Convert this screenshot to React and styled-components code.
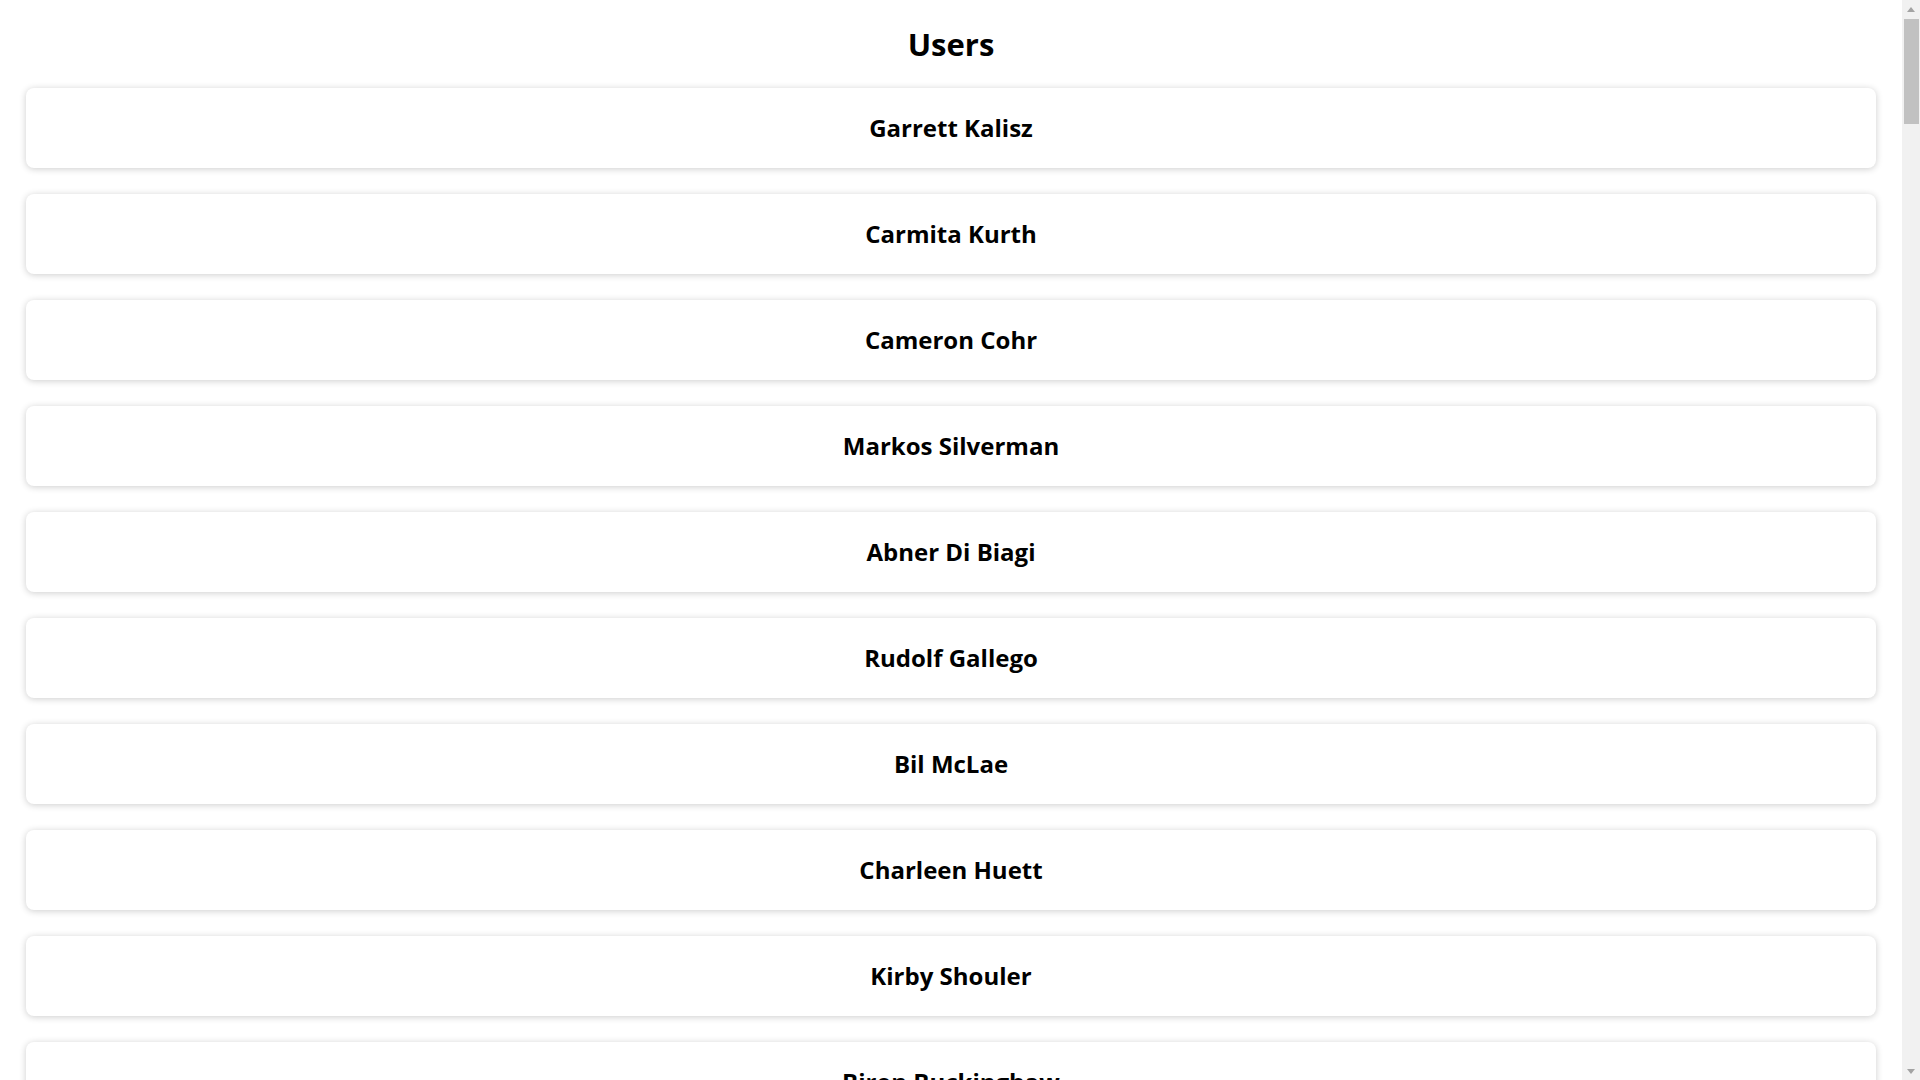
import React from 'react';
import styled, { createGlobalStyle } from 'styled-components';

const GlobalStyle = createGlobalStyle`
  html, body {
    margin: 0;
    padding: 0;
    background: #fff;
    overflow: hidden;
  }
  body {
    font-family: 'Open Sans', 'Noto Sans', sans-serif;
    color: #000;
  }
`;

const Shell = styled.div`
  display: flex;
  height: 100vh;
  overflow: hidden;
`;

const Main = styled.main`
  flex: 1;
  min-width: 0;
  overflow: hidden;
  padding: 0 26px;
`;

const ScrollBar = styled.div`
  width: 18px;
  flex-shrink: 0;
  display: flex;
  flex-direction: column;
  background: #f1f1f1;
`;

const ScrollButton = styled.div`
  height: 18px;
  display: flex;
  align-items: center;
  justify-content: center;

  &::before {
    content: '';
    width: 0;
    height: 0;
    border-left: 4.5px solid transparent;
    border-right: 4.5px solid transparent;
    ${({ $dir }) =>
      $dir === 'up'
        ? 'border-bottom: 5px solid #a3a3a3;'
        : 'border-top: 5px solid #a3a3a3;'}
  }
`;

const Track = styled.div`
  flex: 1;
  padding: 1px 1px 0 2px;
`;

const Thumb = styled.div`
  height: 105px;
  background: #c1c1c1;
`;

const Title = styled.h1`
  margin: 0 0 24px;
  padding-top: 24px;
  font-size: 31px;
  line-height: 40px;
  font-weight: 700;
  text-align: center;
`;

const List = styled.ul`
  list-style: none;
  margin: 0;
  padding: 0;
  display: flex;
  flex-direction: column;
  gap: 26px;
`;

const Card = styled.li`
  height: 80px;
  flex-shrink: 0;
  display: flex;
  align-items: center;
  justify-content: center;
  background: #fff;
  border-radius: 8px;
  box-shadow: 0 1px 7px rgba(0, 0, 0, 0.2);
`;

const Name = styled.h2`
  margin: 0;
  font-size: 24px;
  line-height: 30px;
  font-weight: 700;
`;

const users = [
  'Garrett Kalisz',
  'Carmita Kurth',
  'Cameron Cohr',
  'Markos Silverman',
  'Abner Di Biagi',
  'Rudolf Gallego',
  'Bil McLae',
  'Charleen Huett',
  'Kirby Shouler',
  'Biron Buckinghaw',
];

export default function App() {
  return (
    <>
      <GlobalStyle />
      <Shell>
        <Main>
          <Title>Users</Title>
          <List>
            {users.map((name) => (
              <Card key={name}>
                <Name>{name}</Name>
              </Card>
            ))}
          </List>
        </Main>
        <ScrollBar>
          <ScrollButton $dir="up" />
          <Track>
            <Thumb />
          </Track>
          <ScrollButton $dir="down" />
        </ScrollBar>
      </Shell>
    </>
  );
}
